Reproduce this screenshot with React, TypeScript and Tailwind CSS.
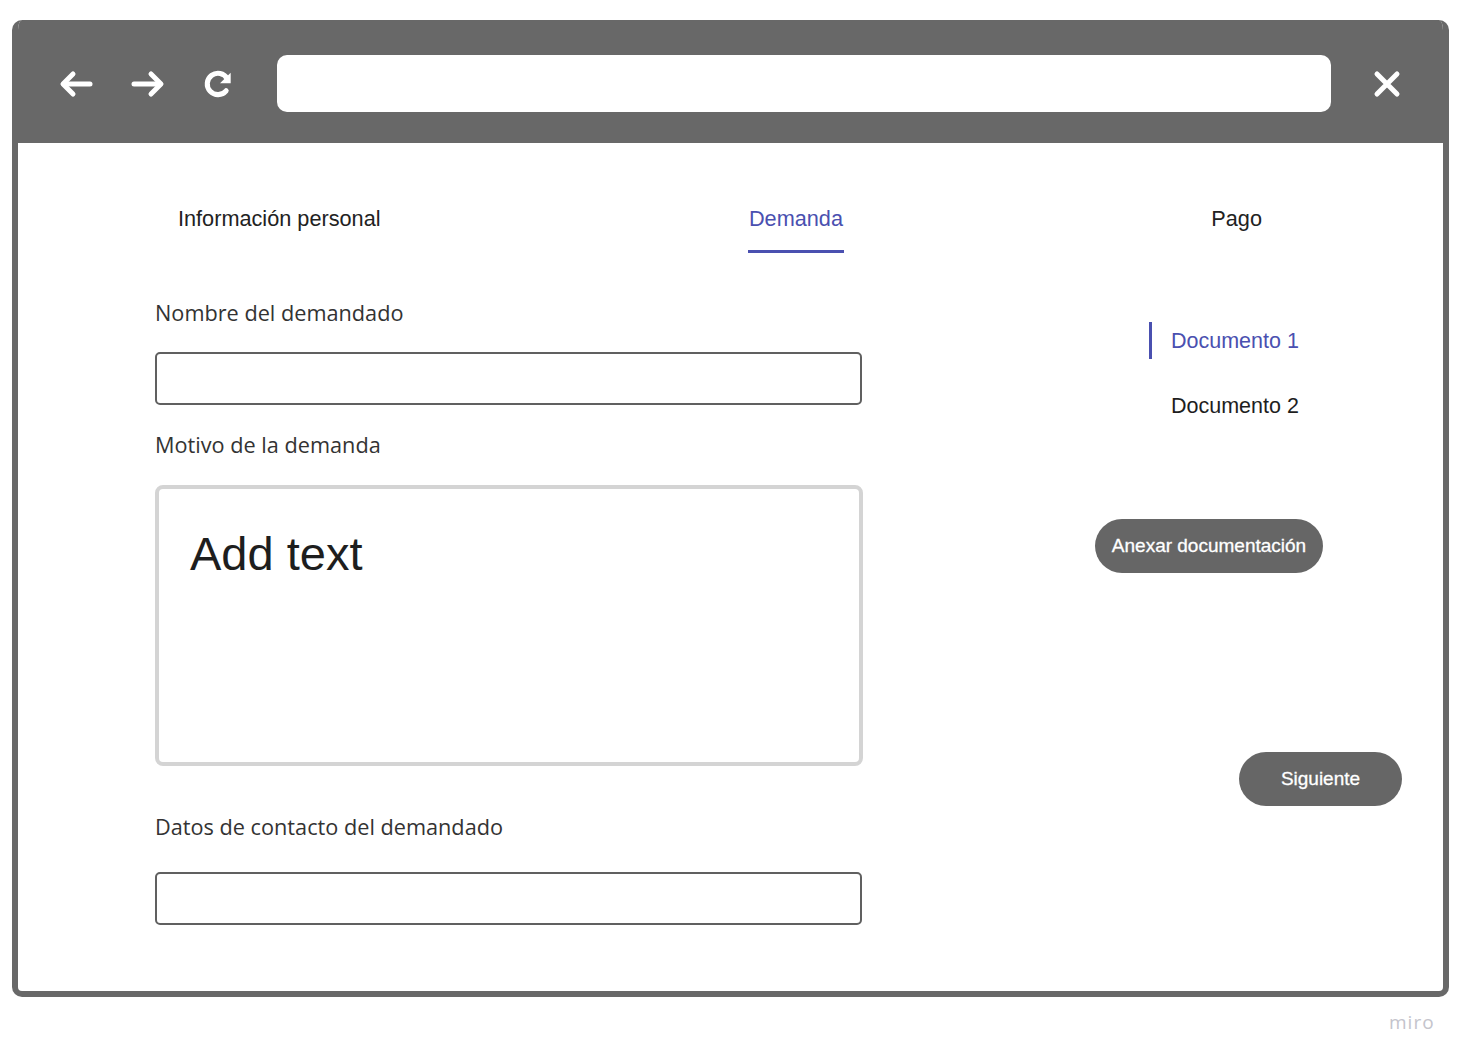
import React from 'react';

const BackIcon = () => (
    <svg width="36" height="30" viewBox="0 0 36 30" fill="none" stroke="white" strokeWidth="5" strokeLinecap="round" strokeLinejoin="round">
        <path d="M32 15H6" />
        <path d="M15 5L5 15l10 10" />
    </svg>
);

const ForwardIcon = () => (
    <svg width="36" height="30" viewBox="0 0 36 30" fill="none" stroke="white" strokeWidth="5" strokeLinecap="round" strokeLinejoin="round">
        <path d="M4 15h26" />
        <path d="M21 5l10 10-10 10" />
    </svg>
);

const ReloadIcon = () => (
    <svg width="32" height="32" viewBox="0 0 24 24" fill="none">
        <path d="M18.1 17.1A8 8 0 1 1 18.9 8" stroke="white" strokeWidth="3.8" strokeLinecap="round" />
        <path d="M21.5 3.5V11.5H13.5Z" fill="white" />
    </svg>
);

const CloseIcon = () => (
    <svg width="30" height="30" viewBox="0 0 30 30" fill="none" stroke="white" strokeWidth="5" strokeLinecap="round">
        <path d="M5 5l20 20M25 5L5 25" />
    </svg>
);

const Label = ({ children }: { children: React.ReactNode }) => (
    <p className="font-['Open_Sans',sans-serif] text-[21.7px] leading-[30px] text-[#333333]">{children}</p>
);

export default function App() {
    return (
        <div className="relative h-[1062px] w-[1469px] bg-white">
            <div className="absolute left-[12px] top-[20px] flex h-[977px] w-[1437px] flex-col overflow-hidden rounded-[10px] border-[6px] border-t-0 border-[#686868] bg-white">
                {/* browser bar */}
                <div className="-mx-[6px] flex h-[123px] shrink-0 items-center bg-[#686868] px-[46px] pt-[4px]">
                    <div className="flex w-[230px] items-center gap-[36px]">
                        <BackIcon />
                        <ForwardIcon />
                        <ReloadIcon />
                    </div>
                    <div className="ml-[-11px] h-[57px] w-[1054px] rounded-[10px] bg-white" />
                    <div className="ml-[41px]">
                        <CloseIcon />
                    </div>
                </div>

                {/* tabs */}
                <div className="ml-[160px] mt-[64px] flex w-[1084px] justify-between font-['Liberation_Sans',Arial,sans-serif] text-[21.7px] leading-[24px]">
                    <span className="text-[#222222]">Información personal</span>
                    <div className="flex flex-col items-center">
                        <span className="text-[#4a50b0]">Demanda</span>
                        <div className="mt-[19px] h-[3px] w-[96px] bg-[#4a50b0]" />
                    </div>
                    <span className="text-[#222222]">Pago</span>
                </div>

                <div className="flex">
                    {/* form */}
                    <div className="ml-[137px] mt-[45px] flex w-[707px] flex-col">
                        <Label>Nombre del demandado</Label>
                        <div className="mt-[24px] h-[53px] rounded-[5px] border-2 border-[#606060]" />
                        <div className="mt-[25px]">
                            <Label>Motivo de la demanda</Label>
                        </div>
                        <div className="mt-[25px] h-[281px] w-[708px] rounded-[8px] border-[4px] border-[#d4d4d4] pl-[31px] pt-[37px]">
                            <span className="font-['Liberation_Sans',Arial,sans-serif] text-[47px] leading-[56px] text-[#1e1e1e]">Add text</span>
                        </div>
                        <div className="mt-[46px]">
                            <Label>Datos de contacto del demandado</Label>
                        </div>
                        <div className="mt-[30px] h-[53px] rounded-[5px] border-2 border-[#606060]" />
                    </div>

                    {/* side */}
                    <div className="ml-[233px] flex flex-col font-['Liberation_Sans',Arial,sans-serif]">
                        <div className="mt-[69px] flex items-center">
                            <div className="ml-[54px] h-[37px] w-[3px] bg-[#4a50b0]" />
                            <span className="ml-[19px] text-[21.5px] leading-[24px] text-[#4a50b0]">Documento 1</span>
                        </div>
                        <span className="ml-[76px] mt-[35px] text-[21.5px] leading-[24px] text-[#1e1e1e]">Documento 2</span>
                        <button className="mt-[101px] flex h-[54px] w-[228px] items-center justify-center rounded-full bg-[#666666] text-[19px] text-white [-webkit-text-stroke:0.3px_white]">
                            Anexar documentación
                        </button>
                        <button className="ml-[144px] mt-[179px] flex h-[54px] w-[163px] items-center justify-center rounded-full bg-[#666666] text-[19px] text-white [-webkit-text-stroke:0.3px_white]">
                            Siguiente
                        </button>
                    </div>
                </div>
            </div>
            <span className="absolute left-[1389px] top-[1008px] font-['Open_Sans',sans-serif] text-[19px] tracking-[1px] text-[#c4c4cc]">miro</span>
        </div>
    );
}
